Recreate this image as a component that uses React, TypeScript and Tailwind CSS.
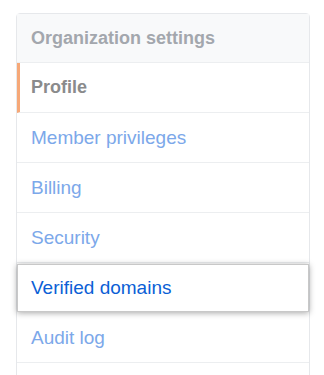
const items = [
  { label: 'Member privileges' },
  { label: 'Billing' },
  { label: 'Security' },
  { label: 'Verified domains', highlighted: true },
  { label: 'Audit log' },
]

export default function App() {
  return (
    <div className="h-[375px] w-[324px] overflow-hidden bg-white pl-[16px] pt-[13px] font-['Liberation_Sans',Arial,sans-serif]">
      <nav className="w-[294px] rounded-t-[4px] border border-[#e6e8eb]">
        <div className="border-b border-[#eceef0] bg-[#f8f9fa] px-[14px] py-[12px] text-[18px] font-bold leading-[24px] text-[#a3a7ad]">
          Organization settings
        </div>
        <div className="border-b border-[#eceef0] border-l-[3px] border-l-[#f6a878] py-[11px] pl-[11px] pr-[14px] text-[18px] font-bold leading-[27px] text-[#8a8b8c]">
          Profile
        </div>
        {items.map((item) =>
          item.highlighted ? (
            <div
              key={item.label}
              className="relative z-10 my-px border border-[#c8c8c8] bg-white py-[10px] pl-[13px] pr-[14px] text-[19px] leading-[26px] text-[#0b5fd6] shadow-[0_1px_6px_rgba(0,0,0,0.35)]"
            >
              {item.label}
            </div>
          ) : (
            <div
              key={item.label}
              className="border-b border-[#eceef0] px-[14px] py-[11px] text-[19px] leading-[27px] text-[#7ca8ea]"
            >
              {item.label}
            </div>
          ),
        )}
        <div className="h-[50px]" />
      </nav>
    </div>
  )
}
